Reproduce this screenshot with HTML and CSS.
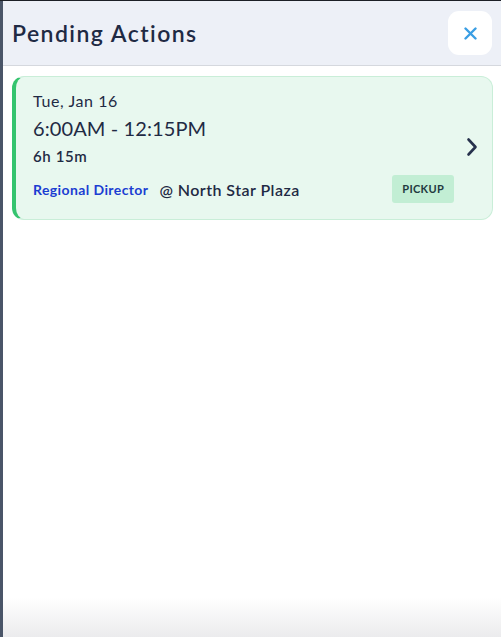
FILE: index.html
```html
<!DOCTYPE html>
<html lang="en">
<head>
    <meta charset="UTF-8">
    <meta name="viewport" content="width=device-width, initial-scale=1.0">
    <title>Pending Actions</title>
    <link rel="stylesheet" href="styles.css">
</head>
<body>
    <div class="panel">
        <header class="panel-header">
            <h1>Pending Actions</h1>
            <button class="close-btn" aria-label="Close">
                <svg width="13" height="13" viewBox="0 0 13 13">
                    <path d="M1.5 1.5 L11.5 11.5 M11.5 1.5 L1.5 11.5" stroke="#3a9ee4" stroke-width="2.4" stroke-linecap="round"/>
                </svg>
            </button>
        </header>

        <div class="list">
            <div class="shift-card">
                <div class="shift-info">
                    <div class="shift-date">Tue, Jan 16</div>
                    <div class="shift-time">6:00AM - 12:15PM</div>
                    <div class="shift-length">6h 15m</div>
                    <div class="shift-meta">
                        <span class="role">Regional Director</span>
                        <span class="location">@ North Star Plaza</span>
                        <span class="badge">PICKUP</span>
                    </div>
                </div>
                <svg class="chevron" width="12" height="20" viewBox="0 0 12 20">
                    <path d="M2.5 2.5 L9.5 10 L2.5 17.5" fill="none" stroke="#27324d" stroke-width="2.6" stroke-linecap="round" stroke-linejoin="round"/>
                </svg>
            </div>
        </div>
    </div>
</body>
</html>
```

FILE: styles.css
```css
* {
    margin: 0;
    padding: 0;
    box-sizing: border-box;
}

body {
    font-family: 'Lato', 'Noto Sans', sans-serif;
    color: #1f2a44;
    background-color: #4a5568;
    border-top: 1px solid #1c1f26;
    height: 100vh;
    padding-left: 3px;
}

.panel {
    height: 100%;
    background: linear-gradient(to bottom, #ffffff 0, #ffffff 596px, #ebebed 100%);
    display: flex;
    flex-direction: column;
}

/* Header */
.panel-header {
    height: 65px;
    background-color: #edf0f7;
    border-bottom: 1px solid #d5d8de;
    display: flex;
    align-items: center;
    justify-content: space-between;
    padding: 0 9px 0 9px;
}

.panel-header h1 {
    font-size: 23px;
    font-weight: 600;
    color: #1f2a44;
    letter-spacing: 1.45px;
}

.close-btn {
    width: 44px;
    height: 44px;
    border: none;
    border-radius: 11px;
    background-color: #ffffff;
    display: flex;
    align-items: center;
    justify-content: center;
    cursor: pointer;
}

/* Card list */
.list {
    padding: 10px 8px 0 9px;
}

.shift-card {
    display: flex;
    align-items: center;
    background-color: #e8f8ef;
    border: 1px solid #c9eed8;
    border-left: 4px solid #35c46f;
    border-radius: 12px;
    padding: 13px 14px 16px 17px;
}

.shift-info {
    flex: 1;
}

.shift-date {
    font-size: 16px;
    line-height: 22px;
    letter-spacing: 0.6px;
}

.shift-time {
    font-size: 20px;
    line-height: 32px;
    letter-spacing: 0.1px;
}

.shift-length {
    font-size: 15px;
    font-weight: 600;
    line-height: 24px;
    letter-spacing: 0.6px;
}

.shift-meta {
    display: flex;
    align-items: center;
    margin-top: 7px;
}

.role {
    color: #1b3ed2;
    font-size: 14px;
    font-weight: 700;
    letter-spacing: 0.4px;
    margin-right: 11px;
}

.location {
    font-size: 16px;
    font-weight: 600;
    letter-spacing: 0.45px;
    flex: 1;
}

.badge {
    background-color: #c2eed4;
    color: #1f3a40;
    font-size: 11px;
    font-weight: 700;
    line-height: 14px;
    letter-spacing: 0.3px;
    padding: 7px 10px;
    border-radius: 3px;
    margin-right: 12px;
}
```
